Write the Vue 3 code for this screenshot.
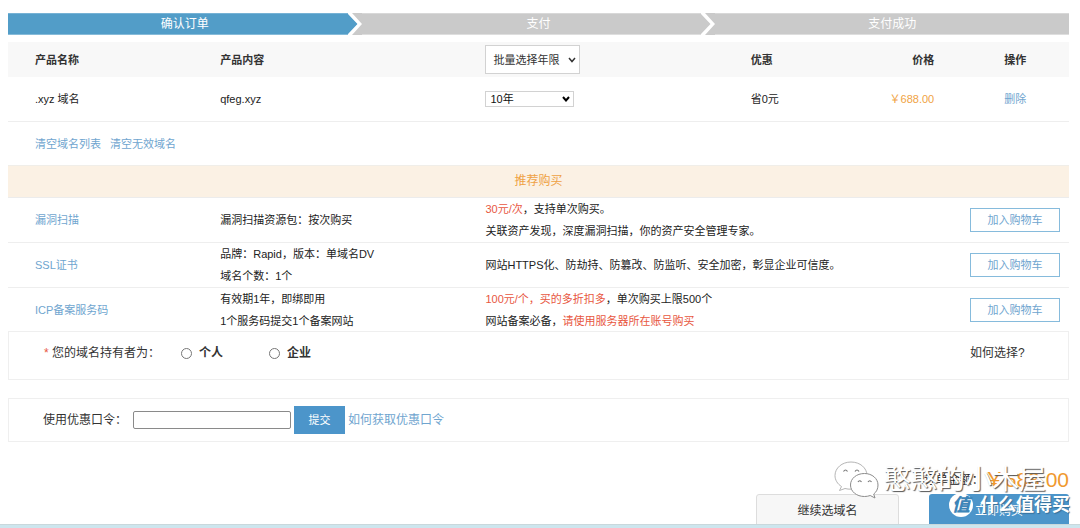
<script setup>
import { ref } from 'vue'

const steps = [
  { name: '确认订单', active: true },
  { name: '支付', active: false },
  { name: '支付成功', active: false },
]
const extras = [
  {
    name: '漏洞扫描',
    content: ['漏洞扫描资源包：按次购买'],
    notes: [
      [{ t: '30元/次', hot: true }, { t: '，支持单次购买。' }],
      [{ t: '关联资产发现，深度漏洞扫描，你的资产安全管理专家。' }],
    ],
  },
  {
    name: 'SSL证书',
    content: ['品牌：Rapid，版本：单域名DV', '域名个数：1个'],
    notes: [[{ t: '网站HTTPS化、防劫持、防篡改、防监听、安全加密，彰显企业可信度。' }]],
  },
  {
    name: 'ICP备案服务码',
    content: ['有效期1年，即绑即用', '1个服务码提交1个备案网站'],
    notes: [
      [{ t: '100元/个，买的多折扣多', hot: true }, { t: '，单次购买上限500个' }],
      [{ t: '网站备案必备，' }, { t: '请使用服务器所在账号购买', hot: true }],
    ],
  },
]
const owner = ref('')
const code = ref('')
</script>

<template>
  <main class="page">
    <ol class="steps">
      <li v-for="(s, i) in steps" :key="s.name" class="step" :class="{ active: s.active }">
        {{ s.name }}
        <svg v-if="i < 2" class="tip" viewBox="0 0 14 22" aria-hidden="true">
          <rect width="14" height="22" fill="#cacaca" />
          <path d="M0 0L10 11L0 22Z" :fill="s.active ? '#529dc8' : '#cacaca'" />
          <path d="M-1 0H4L14 11L4 22H-1L9.500 11Z" fill="#fff" />
        </svg>
      </li>
    </ol>

    <table class="grid order">
      <colgroup>
        <col class="c-name" /><col class="c-wide" /><col class="c-wide" /><col class="c-save" /><col class="c-price" /><col />
      </colgroup>
      <thead>
        <tr>
          <th>产品名称</th>
          <th>产品内容</th>
          <th>
            <span class="pick big">
              <select aria-label="批量选择年限"><option>批量选择年限</option></select>
              <svg viewBox="0 0 8 6" aria-hidden="true"><path d="M1 1L4 4.500L7 1" /></svg>
            </span>
          </th>
          <th>优惠</th>
          <th class="right">价格</th>
          <th class="act">操作</th>
        </tr>
      </thead>
      <tbody>
        <tr>
          <td>.xyz 域名</td>
          <td>qfeg.xyz</td>
          <td>
            <span class="pick small">
              <select aria-label="年限"><option>10年</option></select>
              <svg viewBox="0 0 8 6" aria-hidden="true"><path d="M1 1L4 4.500L7 1" /></svg>
            </span>
          </td>
          <td>省0元</td>
          <td class="right price">￥688.00</td>
          <td class="act"><a href="#">删除</a></td>
        </tr>
      </tbody>
    </table>

    <nav class="clear">
      <a href="#">清空域名列表</a>
      <a href="#">清空无效域名</a>
    </nav>

    <h2 class="band">推荐购买</h2>
    <table class="grid extras">
      <colgroup><col class="c-name" /><col class="c-wide" /><col /><col class="c-btn" /></colgroup>
      <tbody>
        <tr v-for="e in extras" :key="e.name">
          <td><a href="#">{{ e.name }}</a></td>
          <td><div v-for="c in e.content" :key="c">{{ c }}</div></td>
          <td>
            <div v-for="(line, i) in e.notes" :key="i"><span v-for="p in line" :key="p.t" :class="{ hot: p.hot }">{{ p.t }}</span></div>
          </td>
          <td><button type="button" class="add">加入购物车</button></td>
        </tr>
      </tbody>
    </table>

    <section class="box owner">
      <span class="lead"><i>*</i> 您的域名持有者为：</span>
      <label><input v-model="owner" type="radio" name="owner" value="person" />个人</label>
      <label><input v-model="owner" type="radio" name="owner" value="company" />企业</label>
      <span class="how">如何选择?</span>
    </section>

    <form class="box promo" @submit.prevent>
      <label for="code">使用优惠口令：</label>
      <input id="code" v-model="code" type="text" />
      <button type="submit">提交</button>
      <a href="#">如何获取优惠口令</a>
    </form>

    <footer class="foot">
      <p class="total"><span>订单金额：</span><strong>￥688.00</strong></p>
      <div class="buttons">
        <button type="button" class="more">继续选域名</button>
        <button type="button" class="buy">立即购买</button>
      </div>
      <div class="mark account">
        <svg viewBox="0 0 46 38" aria-hidden="true">
          <g fill="#fff" stroke="#8c8c8c" stroke-width="1">
            <path stroke="#b5b5b5" d="M17 1C8 1 1 7 1 14.500C1 19 3.500 23 7.500 25.500L5.500 29.500L11 27.500C13 28 15 28.300 17 28.200C26 28 33 22 33 14.500S26 1 17 1Z" />
            <path d="M30.500 12.500C22.500 12.500 16.500 17.500 16.500 24S22.500 35.500 30.500 35.500C32.500 35.500 34.500 35.200 36.200 34.500L41 37L39.700 33C42.500 31 44 27.800 44 24C44 17.500 38 12.500 30.500 12.500Z" />
          </g>
          <g fill="none" stroke="#777" stroke-width="1.200">
            <path d="M9.500 10.500Q11.500 7.500 13.500 10.500M21 10.500Q23 7.500 25 10.500M24 21Q25.500 18.500 27.500 21M34 21Q35.800 18.500 37.500 21" />
          </g>
        </svg>
        <span>憨憨的小木屋</span>
      </div>
      <div class="mark site"><b>值</b><span>什么值得买</span></div>
    </footer>
    <div class="edge"></div>
  </main>
</template>

<style>
body {
  margin: 0;
  background: #fff;
  overflow: hidden;
}
</style>

<style scoped>
.page {
  box-sizing: border-box;
  padding: 13px 11px 0 8px;
  font: 11px/22px "Liberation Sans", "Noto Sans CJK SC", sans-serif;
  color: #222;
}
a {
  color: #6fa5cf;
  text-decoration: none;
}
button, input, select {
  font: inherit;
  box-sizing: border-box;
  margin: 0;
}
.steps {
  display: flex;
  margin: 0 0 7px;
  padding: 0;
  list-style: none;
}
.step {
  position: relative;
  flex: 1;
  height: 22px;
  background: #cacaca;
  box-shadow: inset 0 1px #d8d8d8, inset 0 -1px #dedede;
  color: #fff;
  font-size: 12px;
  line-height: 22px;
  text-align: center;
}
.step.active {
  background: #529dc8;
  box-shadow: inset 0 1px #76b2d5, inset 0 -1px #86bbd9;
}
.tip {
  position: absolute;
  top: 0;
  right: 0;
  width: 14px;
  height: 22px;
}
.grid {
  width: 100%;
  table-layout: fixed;
  border-collapse: separate;
  border-spacing: 0;
}
.c-name { width: 20%; }
.c-wide { width: 25%; }
.c-save { width: 8%; }
.c-price { width: 9.3%; }
.c-btn { width: 99px; }
.grid th, .grid td {
  padding: 0;
  text-align: left;
  vertical-align: middle;
}
.grid th:first-child, .grid td:first-child {
  padding-left: 27px;
}
.grid .right { text-align: right; }
.grid .act { padding-left: 70px; }
.order th {
  height: 35px;
  background: #f8f8f8;
  color: #333;
}
.order td {
  height: 44px;
  border-bottom: 1px solid #eee;
}
.order .price { color: #f0a344; }
.pick {
  position: relative;
  display: block;
}
.pick select {
  display: block;
  width: 100%;
  height: 100%;
  padding: 0 0 0 7px;
  appearance: none;
  border: 1px solid #d2d2d2;
  border-radius: 0;
  background: #fff;
  color: #333;
  font-weight: 400;
}
.pick svg {
  position: absolute;
  top: 50%;
  right: 4px;
  width: 8px;
  height: 6px;
  margin-top: -3px;
  fill: none;
  stroke: #333;
  stroke-width: 1.5;
  pointer-events: none;
}
.pick.big { width: 95px; height: 29px; }
.pick.small { width: 89px; height: 16px; }
.pick.small select { padding-left: 4px; line-height: 14px; color: #111; }
.pick.small svg { stroke: #000; stroke-width: 2; }
.clear {
  display: flex;
  align-items: center;
  gap: 9px;
  height: 43px;
  padding-left: 27px;
}
.band {
  margin: 0;
  border-top: 1px solid #f0eee9;
  border-bottom: 1px solid #ececec;
  background: #fbf1e4;
  color: #efa244;
  font-size: 12px;
  font-weight: 400;
  line-height: 31px;
  text-align: center;
}
.extras {
  margin-bottom: -1px;
}
.extras td {
  height: 44px;
  border-bottom: 1px solid #eee;
}
.extras tr:last-child td {
  border-bottom: 0;
}
.hot { color: #e8573f; }
.add {
  display: block;
  width: 90px;
  height: 24px;
  padding: 0;
  border: 1px solid #86bbdc;
  background: #fff;
  color: #6fa5cf;
}
.box {
  display: flex;
  box-sizing: border-box;
  border: 1px solid #efefef;
  font-size: 12px;
  color: #333;
}
.owner {
  height: 49px;
  padding: 10px 0 0 35px;
  margin-bottom: 18px;
  line-height: 22px;
}
.owner .lead { width: 137px; }
.owner i {
  color: #e8573f;
  font-style: normal;
}
.owner label {
  display: flex;
  align-items: center;
  width: 88px;
  height: 22px;
  gap: 7px;
  font-weight: 700;
}
.owner input {
  width: 11px;
  height: 11px;
}
.owner .how {
  width: 98px;
  margin-left: auto;
}
.promo {
  align-items: center;
  height: 44px;
  padding-left: 34px;
  gap: 3px;
}
.promo label { width: 87px; }
.promo input {
  width: 158px;
  height: 18px;
  border: 1px solid #8a8a8a;
  border-radius: 2px;
  background: #fff;
}
.promo button {
  width: 51px;
  height: 28px;
  padding: 0;
  border: 0;
  background: #4c95ca;
  color: #fff;
  font-size: 11px;
}
.foot {
  position: relative;
  padding-top: 24px;
}
.total {
  display: flex;
  justify-content: flex-end;
  align-items: center;
  height: 28px;
  margin: 0;
  font-size: 12px;
  line-height: 28px;
}
.total strong {
  color: #f0992f;
  font-size: 21px;
  font-weight: 400;
}
.buttons {
  display: flex;
  justify-content: flex-end;
  gap: 30px;
}
.buttons button {
  height: 34px;
  padding: 0;
  border-radius: 3px 3px 0 0;
  font-size: 12px;
}
.more {
  width: 143px;
  border: 1px solid #ddd;
  background: #f7f7f7;
  color: #333;
}
.buy {
  width: 140px;
  border: 0;
  background: #4c95ca;
  color: #fff;
}
.mark {
  position: absolute;
  display: flex;
  align-items: center;
  white-space: nowrap;
  color: #fff;
}
.account {
  top: 19px;
  right: 23px;
  gap: 4px;
  font-size: 27px;
  line-height: 38px;
  text-shadow: 1px 1px 1px #555;
}
.account svg {
  width: 46px;
  height: 38px;
}
.site {
  top: 51px;
  right: -1px;
  gap: 7px;
  font-size: 18px;
  font-weight: 700;
  line-height: 24px;
  text-shadow: 1px 1px 1px #356f99;
}
.site b {
  width: 24px;
  height: 24px;
  border-radius: 50%;
  background: #fff;
  color: #3d85b8;
  font-size: 18px;
  font-style: italic;
  text-align: center;
  text-shadow: none;
}
.edge {
  position: fixed;
  right: 0;
  bottom: 0;
  left: 0;
  height: 3px;
  border-top: 1px solid #c9d8dc;
  background: #cde6ee;
}
</style>
